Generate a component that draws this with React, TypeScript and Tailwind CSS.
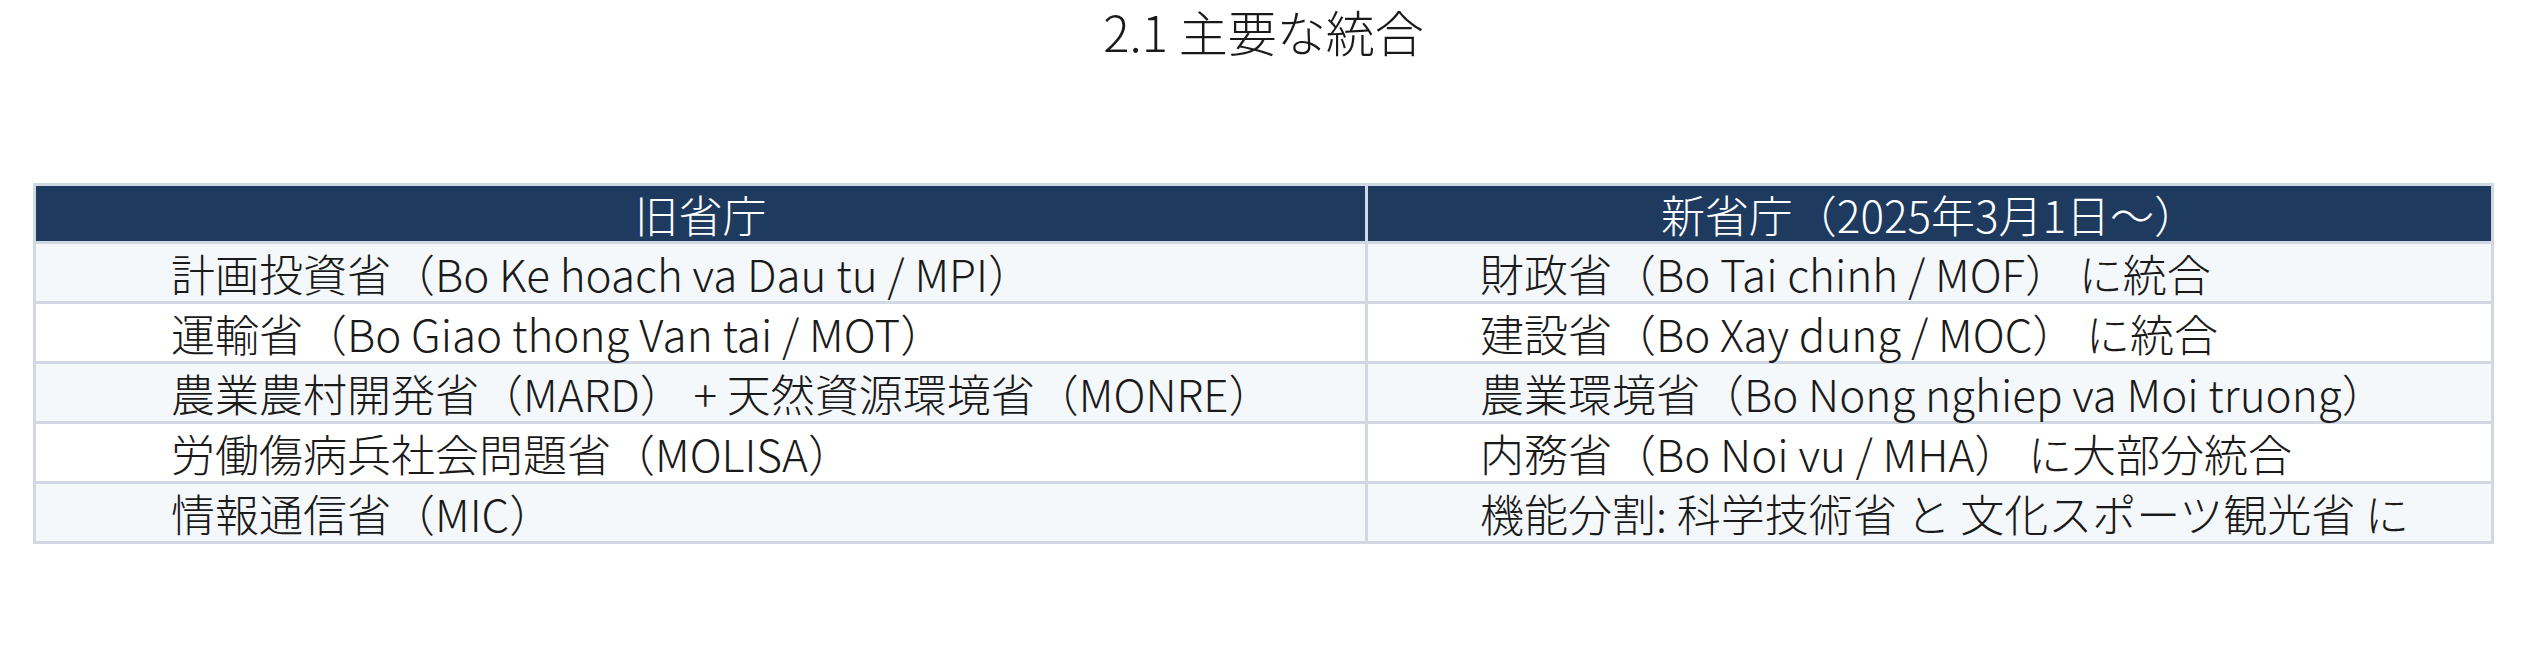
const rows: [string, string][] = [
  ["計画投資省（Bo Ke hoach va Dau tu / MPI）", "財政省（Bo Tai chinh / MOF） に統合"],
  ["運輸省（Bo Giao thong Van tai / MOT）", "建設省（Bo Xay dung / MOC） に統合"],
  ["農業農村開発省（MARD） + 天然資源環境省（MONRE）", "農業環境省（Bo Nong nghiep va Moi truong）"],
  ["労働傷病兵社会問題省（MOLISA）", "内務省（Bo Noi vu / MHA） に大部分統合"],
  ["情報通信省（MIC）", "機能分割: 科学技術省 と 文化スポーツ観光省 に"],
];

export default function App() {
  return (
    <div
      className="h-[667px] w-full bg-white text-[#1a1a1a] font-extralight"
      style={{ fontFamily: '"Noto Sans CJK JP", "Noto Sans", sans-serif' }}
    >
      <h1 className="pt-[2px] text-center text-[49px] leading-[58px] font-extralight">2.1 主要な統合</h1>
      <div className="px-[33px] pt-[123px]">
        <table className="w-full table-fixed border-collapse border-[3px] border-[#cfd8e3]">
          <colgroup>
            <col className="w-[1332px]" />
            <col />
          </colgroup>
          <thead>
            <tr className="h-[58px] bg-[#1e3a5f] text-white">
              <th className="border-[3px] border-[#cfd8e3] text-center text-[44px] leading-none font-extralight">旧省庁</th>
              <th className="border-[3px] border-[#cfd8e3] text-center text-[44px] leading-none font-extralight">新省庁（2025年3月1日～）</th>
            </tr>
          </thead>
          <tbody>
            {rows.map(([a, b], i) => (
              <tr key={i} className={i % 2 === 0 ? "h-[60px] bg-[#f5f8fb]" : "h-[60px] bg-white"}>
                <td className="border-[3px] border-[#cfd8e3] pl-[135px] text-[44px] leading-none whitespace-nowrap">{a}</td>
                <td className="border-[3px] border-[#cfd8e3] pl-[112px] text-[44px] leading-none whitespace-nowrap">{b}</td>
              </tr>
            ))}
          </tbody>
        </table>
      </div>
    </div>
  );
}
